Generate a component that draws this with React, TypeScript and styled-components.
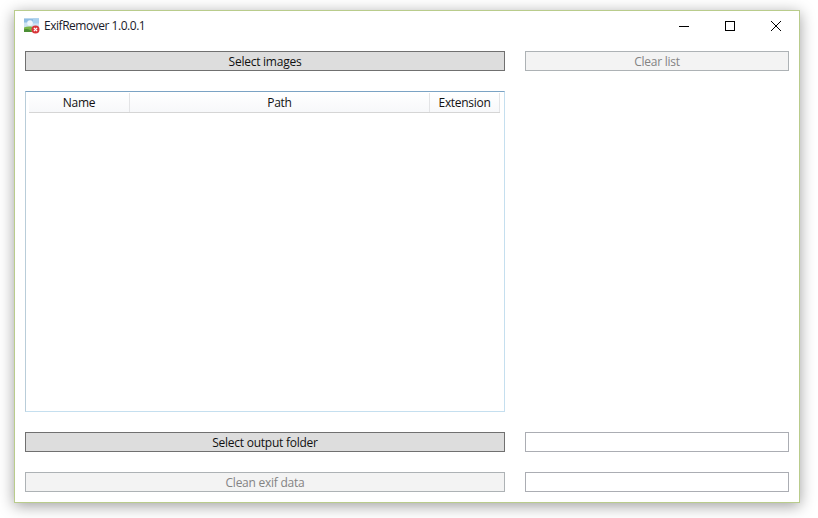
import React from 'react'
import styled, { createGlobalStyle } from 'styled-components'

const GlobalStyle = createGlobalStyle`
  html, body {
    margin: 0;
    padding: 0;
    height: 100%;
    background: #ffffff;
    overflow: hidden;
  }
`

const Desktop = styled.div`
  width: 818px;
  height: 518px;
  padding: 10px 0 0 14px;
  box-sizing: border-box;
  font-family: "Open Sans", "Noto Sans", sans-serif;
  font-size: 12px;
  color: #111111;
`

const Window = styled.div`
  width: 786px;
  height: 493px;
  box-sizing: border-box;
  background: #ffffff;
  border: 1px solid #b9cc8c;
  box-shadow: 0 3px 14px rgba(0, 0, 0, 0.38);
  display: flex;
  flex-direction: column;
`

const TitleBar = styled.div`
  height: 30px;
  margin-bottom: 10px;
  display: flex;
  align-items: center;
  padding-left: 9px;
`

const TitleText = styled.span`
  margin-left: 4px;
  margin-top: -1px;
  font-size: 12px;
  letter-spacing: -0.47px;
  color: #1a1a2a;
`

const WindowButtons = styled.div`
  margin-left: auto;
  display: flex;
`

const WindowButton = styled.div`
  width: 46px;
  height: 30px;
  display: flex;
  align-items: center;
  justify-content: center;
`

const Content = styled.div`
  display: grid;
  grid-template-columns: 480px 264px;
  grid-template-rows: 20px 321px 20px 20px;
  gap: 20px;
  padding-left: 10px;
`

const ActionButton = styled.div<{ $disabled?: boolean }>`
  box-sizing: border-box;
  display: flex;
  align-items: center;
  justify-content: center;
  background: ${({ $disabled }) => ($disabled ? '#f3f3f3' : '#dddddd')};
  border: 1px solid ${({ $disabled }) => ($disabled ? '#adb2b5' : '#707070')};
  color: ${({ $disabled }) => ($disabled ? '#838383' : '#111111')};
  letter-spacing: -0.25px;
`

const ListView = styled.div`
  box-sizing: border-box;
  border: 1px solid #c5dfef;
  border-top-color: #7ba3c4;
  border-left-color: #b9cdd9;
  padding: 1px 4px 0 3px;
`

const ListHeader = styled.div`
  display: grid;
  grid-template-columns: 101px 300px 70px;
  width: 471px;
  height: 20px;
  box-sizing: border-box;
  border-bottom: 1px solid #d5d5d5;
  background: linear-gradient(#ffffff, #f7f8fa);
`

const HeaderCell = styled.div`
  display: flex;
  align-items: center;
  justify-content: center;
  border-right: 1px solid #e3e4e6;
  letter-spacing: -0.3px;
`

const Spacer = styled.div``

const TextField = styled.div`
  box-sizing: border-box;
  background: #ffffff;
  border: 1px solid #abadb3;
`

function AppIcon() {
  return (
    <svg width="16" height="16" viewBox="0 0 16 16">
      <rect x="0" y="0.5" width="15" height="13.5" fill="#cfe3f3" />
      <path d="M0 0.5h15v4H0z" fill="#8fbde3" />
      <path d="M9 0.5h6v5H9z" fill="#a9d0ee" />
      <circle cx="6" cy="5" r="2.8" fill="#eef6fc" />
      <path d="M0 9.5c4-1.5 7-1 15 0.5v4H0z" fill="#7ab648" />
      <path d="M0 11.5c3-1 6-.5 8 2.5H0z" fill="#4c8f35" />
      <circle cx="11.5" cy="11.5" r="4" fill="#d9363a" />
      <path d="M9.9 9.9l3.2 3.2M13.1 9.9l-3.2 3.2" stroke="#ffffff" strokeWidth="1.3" />
    </svg>
  )
}

export default function App() {
  return (
    <Desktop>
      <GlobalStyle />
      <Window>
        <TitleBar>
          <AppIcon />
          <TitleText>ExifRemover 1.0.0.1</TitleText>
          <WindowButtons>
            <WindowButton>
              <svg width="10" height="10" viewBox="0 0 10 10">
                <path d="M0 5.5h10" stroke="#000" strokeWidth="1" />
              </svg>
            </WindowButton>
            <WindowButton>
              <svg width="10" height="10" viewBox="0 0 10 10">
                <rect x="0.5" y="0.5" width="9" height="9" fill="none" stroke="#000" strokeWidth="1" />
              </svg>
            </WindowButton>
            <WindowButton>
              <svg width="10" height="10" viewBox="0 0 10 10">
                <path d="M0 0l10 10M10 0L0 10" stroke="#000" strokeWidth="1" />
              </svg>
            </WindowButton>
          </WindowButtons>
        </TitleBar>
        <Content>
          <ActionButton>Select images</ActionButton>
          <ActionButton $disabled>Clear list</ActionButton>
          <ListView>
            <ListHeader>
              <HeaderCell>Name</HeaderCell>
              <HeaderCell>Path</HeaderCell>
              <HeaderCell>Extension</HeaderCell>
            </ListHeader>
          </ListView>
          <Spacer />
          <ActionButton>Select output folder</ActionButton>
          <TextField />
          <ActionButton $disabled>Clean exif data</ActionButton>
          <TextField />
        </Content>
      </Window>
    </Desktop>
  )
}
